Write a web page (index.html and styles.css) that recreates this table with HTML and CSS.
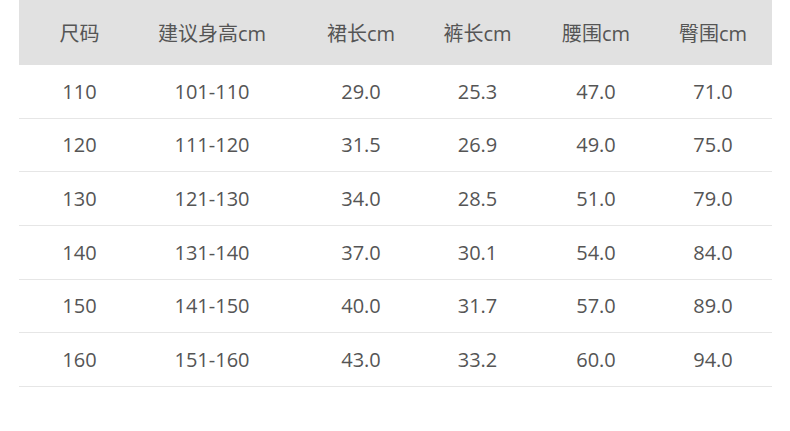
FILE: index.html
```html
<!DOCTYPE html>
<html lang="zh">
<head>
<meta charset="utf-8">
<link rel="stylesheet" href="styles.css">
</head>
<body>
<div class="table">
  <div class="row head">
    <div>尺码</div><div>建议身高cm</div><div>裙长cm</div><div>裤长cm</div><div>腰围cm</div><div>臀围cm</div>
  </div>
  <div class="row"><div>110</div><div>101-110</div><div>29.0</div><div>25.3</div><div>47.0</div><div>71.0</div></div>
  <div class="row"><div>120</div><div>111-120</div><div>31.5</div><div>26.9</div><div>49.0</div><div>75.0</div></div>
  <div class="row"><div>130</div><div>121-130</div><div>34.0</div><div>28.5</div><div>51.0</div><div>79.0</div></div>
  <div class="row"><div>140</div><div>131-140</div><div>37.0</div><div>30.1</div><div>54.0</div><div>84.0</div></div>
  <div class="row"><div>150</div><div>141-150</div><div>40.0</div><div>31.7</div><div>57.0</div><div>89.0</div></div>
  <div class="row"><div>160</div><div>151-160</div><div>43.0</div><div>33.2</div><div>60.0</div><div>94.0</div></div>
</div>
</body>
</html>
```
FILE: styles.css
```css
html, body {
  margin: 0;
  padding: 0;
  background: #fff;
}
body {
  width: 790px;
  height: 431px;
  overflow: hidden;
  font-family: "Open Sans", "Noto Sans CJK SC", sans-serif;
  color: #555;
  font-size: 20px;
}
.table {
  margin-left: 19px;
  width: 753px;
}
.row {
  display: grid;
  grid-template-columns: 121px 144px 154px 79px 158px 76px;
  padding-right: 21px;
  height: 53.67px;
  box-sizing: border-box;
  border-bottom: 1px solid #e6e6e6;
  align-items: center;
  text-align: center;
  white-space: nowrap;
}
.row > div {
  display: flex;
  justify-content: center;
}
.row.head {
  height: 65px;
  background: #e1e1e1;
  border-bottom: none;
}
```
